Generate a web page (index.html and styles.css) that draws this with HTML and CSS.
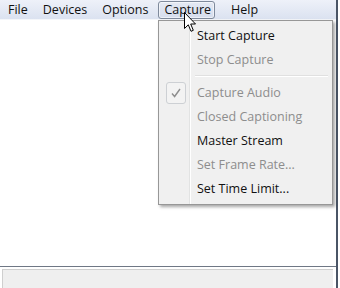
FILE: index.html
```html
<!DOCTYPE html>
<html>
<head>
<meta charset="utf-8">
<link rel="stylesheet" href="styles.css">
</head>
<body>
<div class="window">
  <div class="menubar">
    <span class="mb-item">File</span>
    <span class="mb-item">Devices</span>
    <span class="mb-item">Options</span>
    <span class="mb-item active">Capture</span>
    <span class="mb-item">Help</span>
  </div>
  <div class="content"></div>
  <div class="statusbar"><div class="status-panel"></div></div>

  <div class="dropdown">
    <div class="dd-item">Start Capture</div>
    <div class="dd-item disabled">Stop Capture</div>
    <div class="dd-sep"></div>
    <div class="dd-item disabled checked">
      <span class="check"><svg width="12" height="12" viewBox="0 0 12 12"><path d="M2 6.5 L4.6 9.5 L10 2" fill="none" stroke="#8e8e8e" stroke-width="1.4"/></svg></span>
      Capture Audio
    </div>
    <div class="dd-item disabled">Closed Captioning</div>
    <div class="dd-item">Master Stream</div>
    <div class="dd-item disabled">Set Frame Rate...</div>
    <div class="dd-item">Set Time Limit...</div>
  </div>

  <svg class="cursor" width="13" height="21" viewBox="0 0 13 21">
    <path d="M0.5 0.5 L0.5 16.5 L4.3 12.8 L7 19.3 L9.3 18.3 L6.7 12 L11.5 12 Z" fill="#fff" stroke="#000" stroke-width="1" stroke-linejoin="round"/>
  </svg>
</div>
</body>
</html>
```
FILE: styles.css
```css
html, body {
  margin: 0;
  padding: 0;
  background: #fff;
}
body {
  width: 340px;
  height: 288px;
  overflow: hidden;
  font-family: "Open Sans", "Noto Sans", sans-serif;
  font-size: 12.5px;
  color: #111;
}
.window {
  position: relative;
  width: 336px;
  height: 288px;
  border-right: 2px solid #4a5566;
  display: flex;
  flex-direction: column;
}
.menubar {
  height: 19px;
  border-bottom: 1px solid #f4f6fa;
  background: linear-gradient(#eef1f9, #dbe2f0);
  display: flex;
  align-items: center;
  padding-left: 1px;
}
.mb-item {
  padding: 0 7px;
  height: 18px;
  line-height: 18px;
  box-sizing: border-box;
}
.mb-item:nth-child(2) { margin-left: 1px; }
.mb-item:nth-child(3) { margin-left: 1px; }
.mb-item:nth-child(4) { margin-left: 3px; }
.mb-item.active {
  border: 1px solid #7f8a9c;
  border-radius: 3px;
  padding: 0 3px 0 5px;
  line-height: 16px;
  background: linear-gradient(#e4e9f3, #d6dded);
  box-shadow: inset 0 0 0 1px rgba(255,255,255,0.55);
}
.mb-item:nth-child(5) { margin-left: 9px; }
.content {
  flex: 1;
  background: #fff;
  border-bottom: 1px solid #6f7785;
}
.statusbar {
  height: 21px;
  padding: 2px 3px 0 2px;
  box-sizing: border-box;
  background: #fff;
}
.status-panel {
  height: 100%;
  background: #efefef;
  border-top: 1px solid #cfcfcf;
  border-left: 1px solid #cfcfcf;
  box-sizing: border-box;
}
.dropdown {
  position: absolute;
  left: 158px;
  top: 20px;
  width: 175px;
  height: 185px;
  box-sizing: border-box;
  padding: 3px 2px 3px 2px;
  background: #f0f0f0 linear-gradient(to right, transparent 30px, #e2e3e3 30px, #e2e3e3 31px, #fff 31px, #fff 32px, transparent 32px);
  border: 1px solid #979797;
  box-shadow: 2px 2px 3px rgba(0,0,0,0.35);
}
.dd-item {
  position: relative;
  height: 24px;
  line-height: 24px;
  padding-left: 36px;
  white-space: nowrap;
}
.dd-item.disabled { color: #8d8d8d; }
.dd-sep {
  height: 9px;
  margin-left: 34px;
  margin-right: 2px;
  background: linear-gradient(transparent 3px, #e0e0e0 3px, #e0e0e0 4px, #fff 4px, #fff 5px, transparent 5px);
}
.check {
  position: absolute;
  left: 5px;
  top: 1px;
  width: 20px;
  height: 22px;
  box-sizing: border-box;
  border: 1px solid #cdd0d4;
  border-radius: 3px;
  background: #f3f3f3;
  display: flex;
  align-items: center;
  justify-content: center;
}
.cursor {
  position: absolute;
  left: 184px;
  top: 12px;
}
```
